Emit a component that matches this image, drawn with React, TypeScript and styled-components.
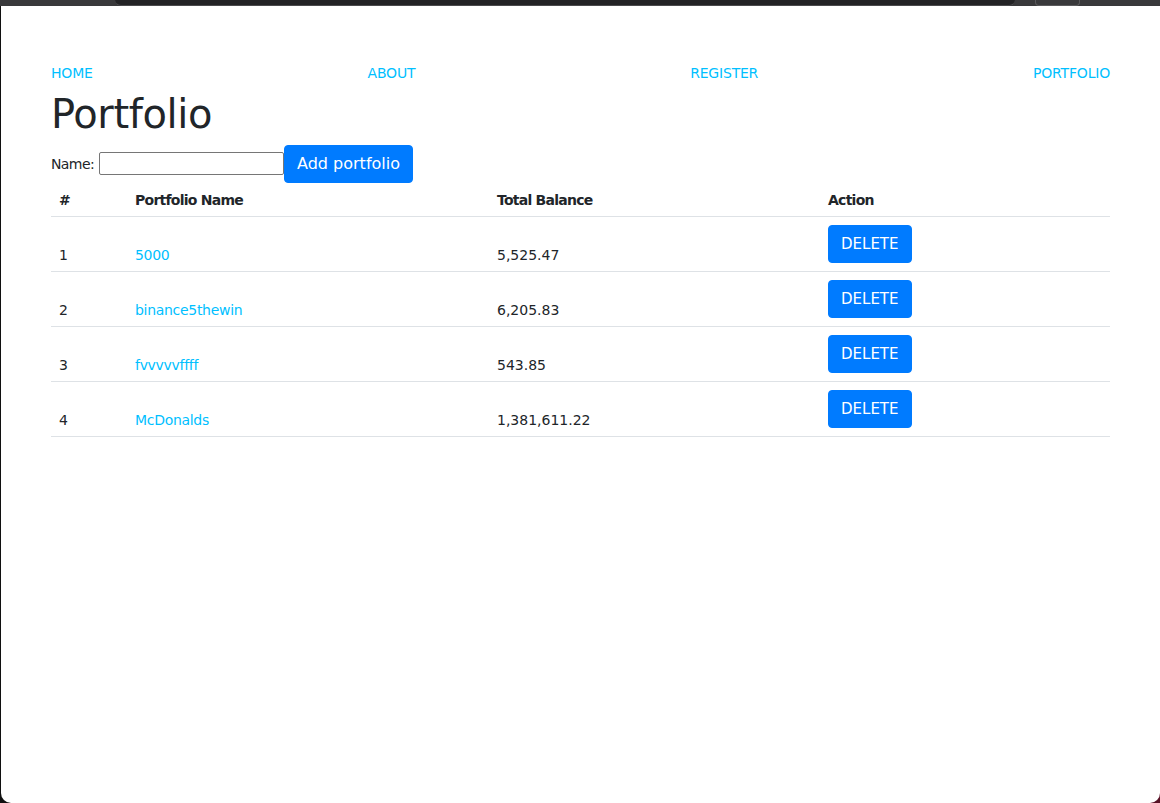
import React from "react";
import styled, { createGlobalStyle } from "styled-components";

const Global = createGlobalStyle`
  html, body { margin: 0; padding: 0; }
  body {
    background: #141414;
    font-family: "DejaVu Sans", "Liberation Sans", sans-serif;
    color: #212529;
    width: 1160px;
    height: 803px;
    overflow: hidden;
  }
  * { box-sizing: border-box; }
`;

const Shell = styled.div`
  display: flex;
  flex-direction: column;
  width: 1160px;
  height: 803px;
  background: linear-gradient(90deg, #101010 0%, #141414 80%, #5a1226 100%);
`;

const TopBar = styled.div`
  height: 6px;
  flex: none;
  display: flex;
  align-items: flex-end;
  background: #39393b;
  padding: 0 80px 0 115px;
  gap: 20px;
`;

const AddressField = styled.div`
  width: 900px;
  height: 6px;
  background: #232325;
  border-bottom: 1px solid #4a4a4c;
  border-radius: 0 0 6px 6px;
`;

const TabStub = styled.div`
  width: 45px;
  height: 6px;
  border: 1px solid #5a5a5c;
  border-top: none;
  border-radius: 0 0 4px 4px;
`;

const Window = styled.div`
  flex: 1;
  margin-left: 1px;
  background: #ffffff;
  border-radius: 0 0 10px 10px;
  padding: 57px 50px 0 50px;
`;

const Nav = styled.nav`
  display: flex;
  justify-content: space-between;
  font-size: 14px;
  line-height: 21px;
  letter-spacing: -0.2px;
`;

const NavLink = styled.a`
  color: #00bfff;
  text-decoration: none;
`;

const Title = styled.h1`
  margin: 6px 0 7px 0;
  font-size: 40px;
  font-weight: 400;
  line-height: 48px;
  color: #212529;
  letter-spacing: -0.4px;
`;

const FormRow = styled.form`
  display: flex;
  align-items: center;
  height: 38px;
`;

const Label = styled.label`
  font-size: 14px;
  letter-spacing: -0.6px;
  margin-right: 5px;
  color: #212529;
`;

const TextInput = styled.input`
  width: 185px;
  height: 23px;
  border: 1px solid #767676;
  border-radius: 2px;
  padding: 1px 2px;
  font-size: 13px;
  margin-top: -1px;
`;

const Button = styled.button<{ $size?: number }>`
  background: #007bff;
  color: #ffffff;
  border: 1px solid #007bff;
  border-radius: 4px;
  padding: 6px 12px;
  font-family: "DejaVu Sans", "Liberation Sans", sans-serif;
  font-size: ${(p) => p.$size ?? 16}px;
  line-height: 24px;
  height: 38px;
  cursor: pointer;
`;

const Table = styled.table`
  width: 1059px;
  border-collapse: collapse;
  table-layout: fixed;
  font-size: 14px;
  line-height: 21px;
`;

const Th = styled.th<{ $w: number }>`
  width: ${(p) => p.$w}px;
  text-align: left;
  font-weight: 700;
  letter-spacing: -0.75px;
  vertical-align: bottom;
  padding: 7px 8px 5px 8px;
  border-bottom: 1px solid #dee2e6;
`;

const Td = styled.td<{ $action?: boolean }>`
  vertical-align: bottom;
  padding: ${(p) => (p.$action ? "8px" : "8px 8px 5px 8px")};
  border-bottom: 1px solid #dee2e6;
  height: 55px;
`;

const NameLink = styled.a`
  color: #00bfff;
  text-decoration: none;
  letter-spacing: -0.3px;
`;

const rows = [
  { id: 1, name: "5000", balance: "5,525.47" },
  { id: 2, name: "binance5thewin", balance: "6,205.83" },
  { id: 3, name: "fvvvvvffff", balance: "543.85" },
  { id: 4, name: "McDonalds", balance: "1,381,611.22" },
];

export default function App() {
  return (
    <Shell>
      <Global />
      <TopBar>
        <AddressField />
        <TabStub />
      </TopBar>
      <Window>
        <Nav>
          <NavLink href="#">HOME</NavLink>
          <NavLink href="#">ABOUT</NavLink>
          <NavLink href="#">REGISTER</NavLink>
          <NavLink href="#">PORTFOLIO</NavLink>
        </Nav>
        <Title>Portfolio</Title>
        <FormRow onSubmit={(e) => e.preventDefault()}>
          <Label>Name:</Label>
          <TextInput type="text" />
          <Button type="submit">Add portfolio</Button>
        </FormRow>
        <Table>
          <thead>
            <tr>
              <Th $w={76}>#</Th>
              <Th $w={362}>Portfolio Name</Th>
              <Th $w={331}>Total Balance</Th>
              <Th $w={290}>Action</Th>
            </tr>
          </thead>
          <tbody>
            {rows.map((r) => (
              <tr key={r.id}>
                <Td>{r.id}</Td>
                <Td>
                  <NameLink href="#">{r.name}</NameLink>
                </Td>
                <Td>{r.balance}</Td>
                <Td $action>
                  <Button type="button" $size={15}>
                    DELETE
                  </Button>
                </Td>
              </tr>
            ))}
          </tbody>
        </Table>
      </Window>
    </Shell>
  );
}
